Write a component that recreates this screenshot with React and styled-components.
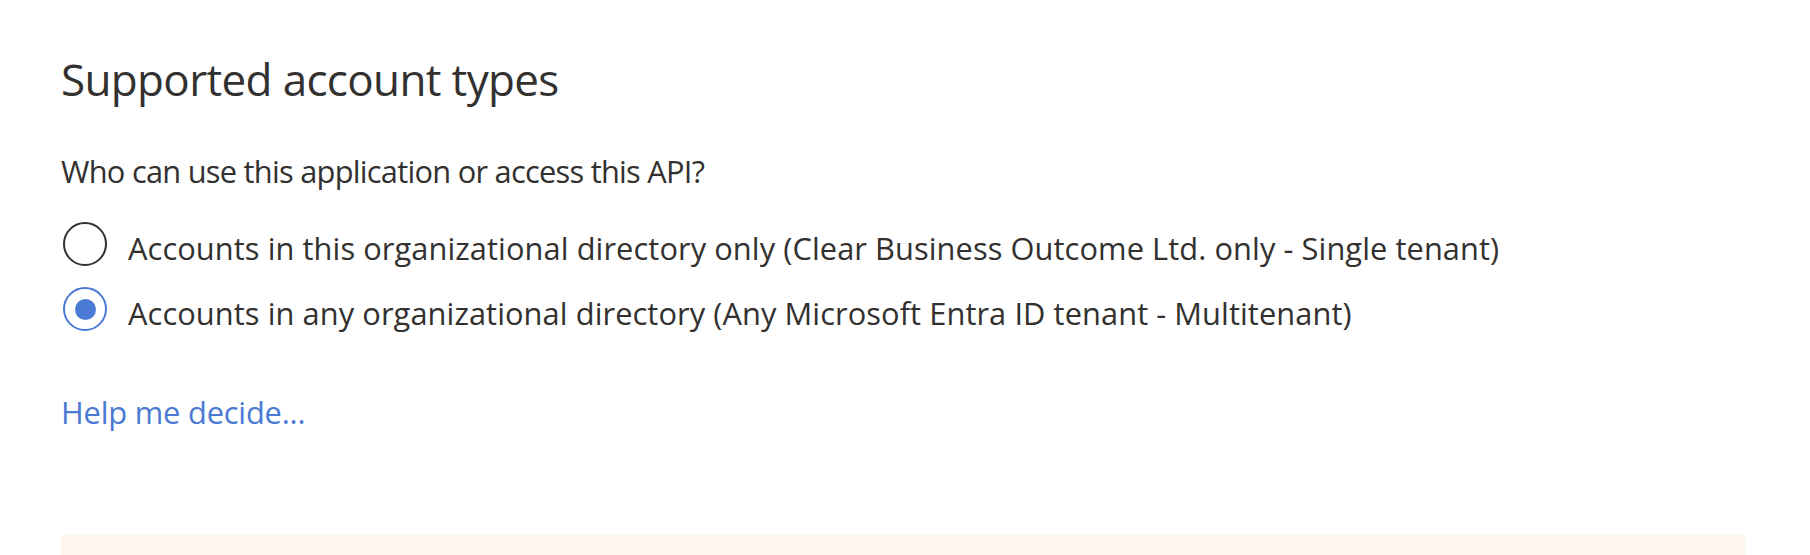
import styled, { createGlobalStyle } from "styled-components";

const GlobalStyle = createGlobalStyle`
  html, body {
    margin: 0;
    padding: 0;
    background: #ffffff;
    overflow: hidden;
  }
  body {
    font-family: "Open Sans", "Noto Sans", sans-serif;
    color: #323130;
  }
`;

const Page = styled.div`
  padding: 49px 64px 0 61px;
`;

const Title = styled.h2`
  margin: 0;
  font-size: 44px;
  font-weight: 400;
  line-height: 60px;
  letter-spacing: -0.65px;
`;

const Question = styled.p`
  margin: 41px 0 0;
  font-size: 30.8px;
  line-height: 42px;
  letter-spacing: -0.74px;
`;

const Options = styled.div`
  margin-top: 30px;
  display: flex;
  flex-direction: column;
  gap: 18px;
`;

const Option = styled.label`
  display: flex;
  align-items: flex-start;
  gap: 21px;
  cursor: pointer;
`;

const Circle = styled.span`
  flex: none;
  box-sizing: border-box;
  width: 44px;
  height: 44px;
  margin-left: 2px;
  border-radius: 50%;
  border: 2.2px solid ${(p) => (p.checked ? "#4a7ad3" : "#323130")};
  display: flex;
  align-items: center;
  justify-content: center;

  &::after {
    content: "";
    width: 21px;
    height: 21px;
    border-radius: 50%;
    background: #4a7ad3;
    display: ${(p) => (p.checked ? "block" : "none")};
  }
`;

const OptionText = styled.span`
  margin-top: 5px;
  font-size: 30.8px;
  line-height: 42px;
  letter-spacing: 0.08px;
`;

const HelpLink = styled.a`
  display: block;
  margin-top: 57px;
  font-size: 30.8px;
  line-height: 42px;
  letter-spacing: -0.18px;
  color: #4a7ad3;
  text-decoration: none;
  cursor: pointer;
`;

const Notice = styled.div`
  margin-top: 101px;
  height: 60px;
  border-radius: 2px;
  background: #fdf7ef;
`;

const options = [
  {
    id: "single",
    label:
      "Accounts in this organizational directory only (Clear Business Outcome Ltd. only - Single tenant)",
  },
  {
    id: "multi",
    label:
      "Accounts in any organizational directory (Any Microsoft Entra ID tenant - Multitenant)",
  },
];

export default function App() {
  const selected = "multi";

  return (
    <>
      <GlobalStyle />
      <Page>
        <Title>Supported account types</Title>
        <Question>Who can use this application or access this API?</Question>
        <Options>
          {options.map((o) => (
            <Option key={o.id}>
              <Circle checked={o.id === selected} />
              <OptionText>{o.label}</OptionText>
            </Option>
          ))}
        </Options>
        <HelpLink>Help me decide...</HelpLink>
        <Notice />
      </Page>
    </>
  );
}
